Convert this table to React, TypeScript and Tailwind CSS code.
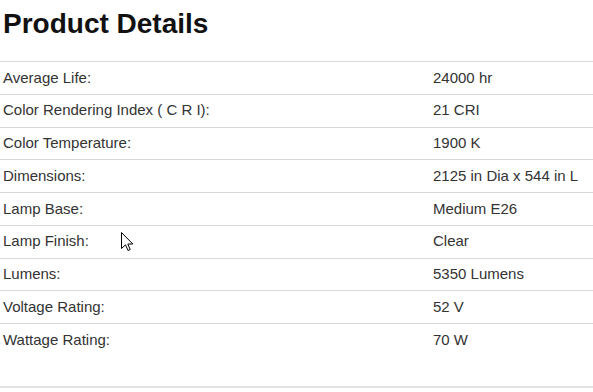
const specs: [string, string][] = [
  ['Average Life:', '24000 hr'],
  ['Color Rendering Index ( C R I):', '21 CRI'],
  ['Color Temperature:', '1900 K'],
  ['Dimensions:', '2125 in Dia x 544 in L'],
  ['Lamp Base:', 'Medium E26'],
  ['Lamp Finish:', 'Clear'],
  ['Lumens:', '5350 Lumens'],
  ['Voltage Rating:', '52 V'],
  ['Wattage Rating:', '70 W'],
];

function Cursor() {
  return (
    <svg
      className="absolute left-[121px] top-[232px]"
      width="13"
      height="20"
      viewBox="0 0 13 20"
    >
      <path
        d="M0.5 0.5 L0.5 16.5 L4.5 12.8 L7 18.5 L9.2 17.5 L6.8 12 L11.8 12 Z"
        fill="#fff"
        stroke="#000"
        strokeWidth="1"
        strokeLinejoin="miter"
      />
    </svg>
  );
}

export default function App() {
  return (
    <div className="relative w-[593px] h-[392px] bg-white overflow-hidden font-['Liberation_Sans',Arial,sans-serif]">
      {/* Header */}
      <h1 className="pl-[3px] mt-[8px] mb-[21px] text-[28px] leading-[32px] font-bold text-[#111]">
        Product Details
      </h1>

      {/* Spec table */}
      <div className="flex flex-col">
        {specs.map(([label, value]) => (
          <div
            key={label}
            className="grid grid-cols-[430px_1fr] items-center h-[32.75px] border-t border-[#d8d8d8] text-[15px] text-[#333]"
          >
            <span className="pl-[3px]">{label}</span>
            <span className="pl-[3px]">{value}</span>
          </div>
        ))}
      </div>

      <div className="mt-[30px] border-t-2 border-[#e3e3e3]" />

      <Cursor />
    </div>
  );
}
